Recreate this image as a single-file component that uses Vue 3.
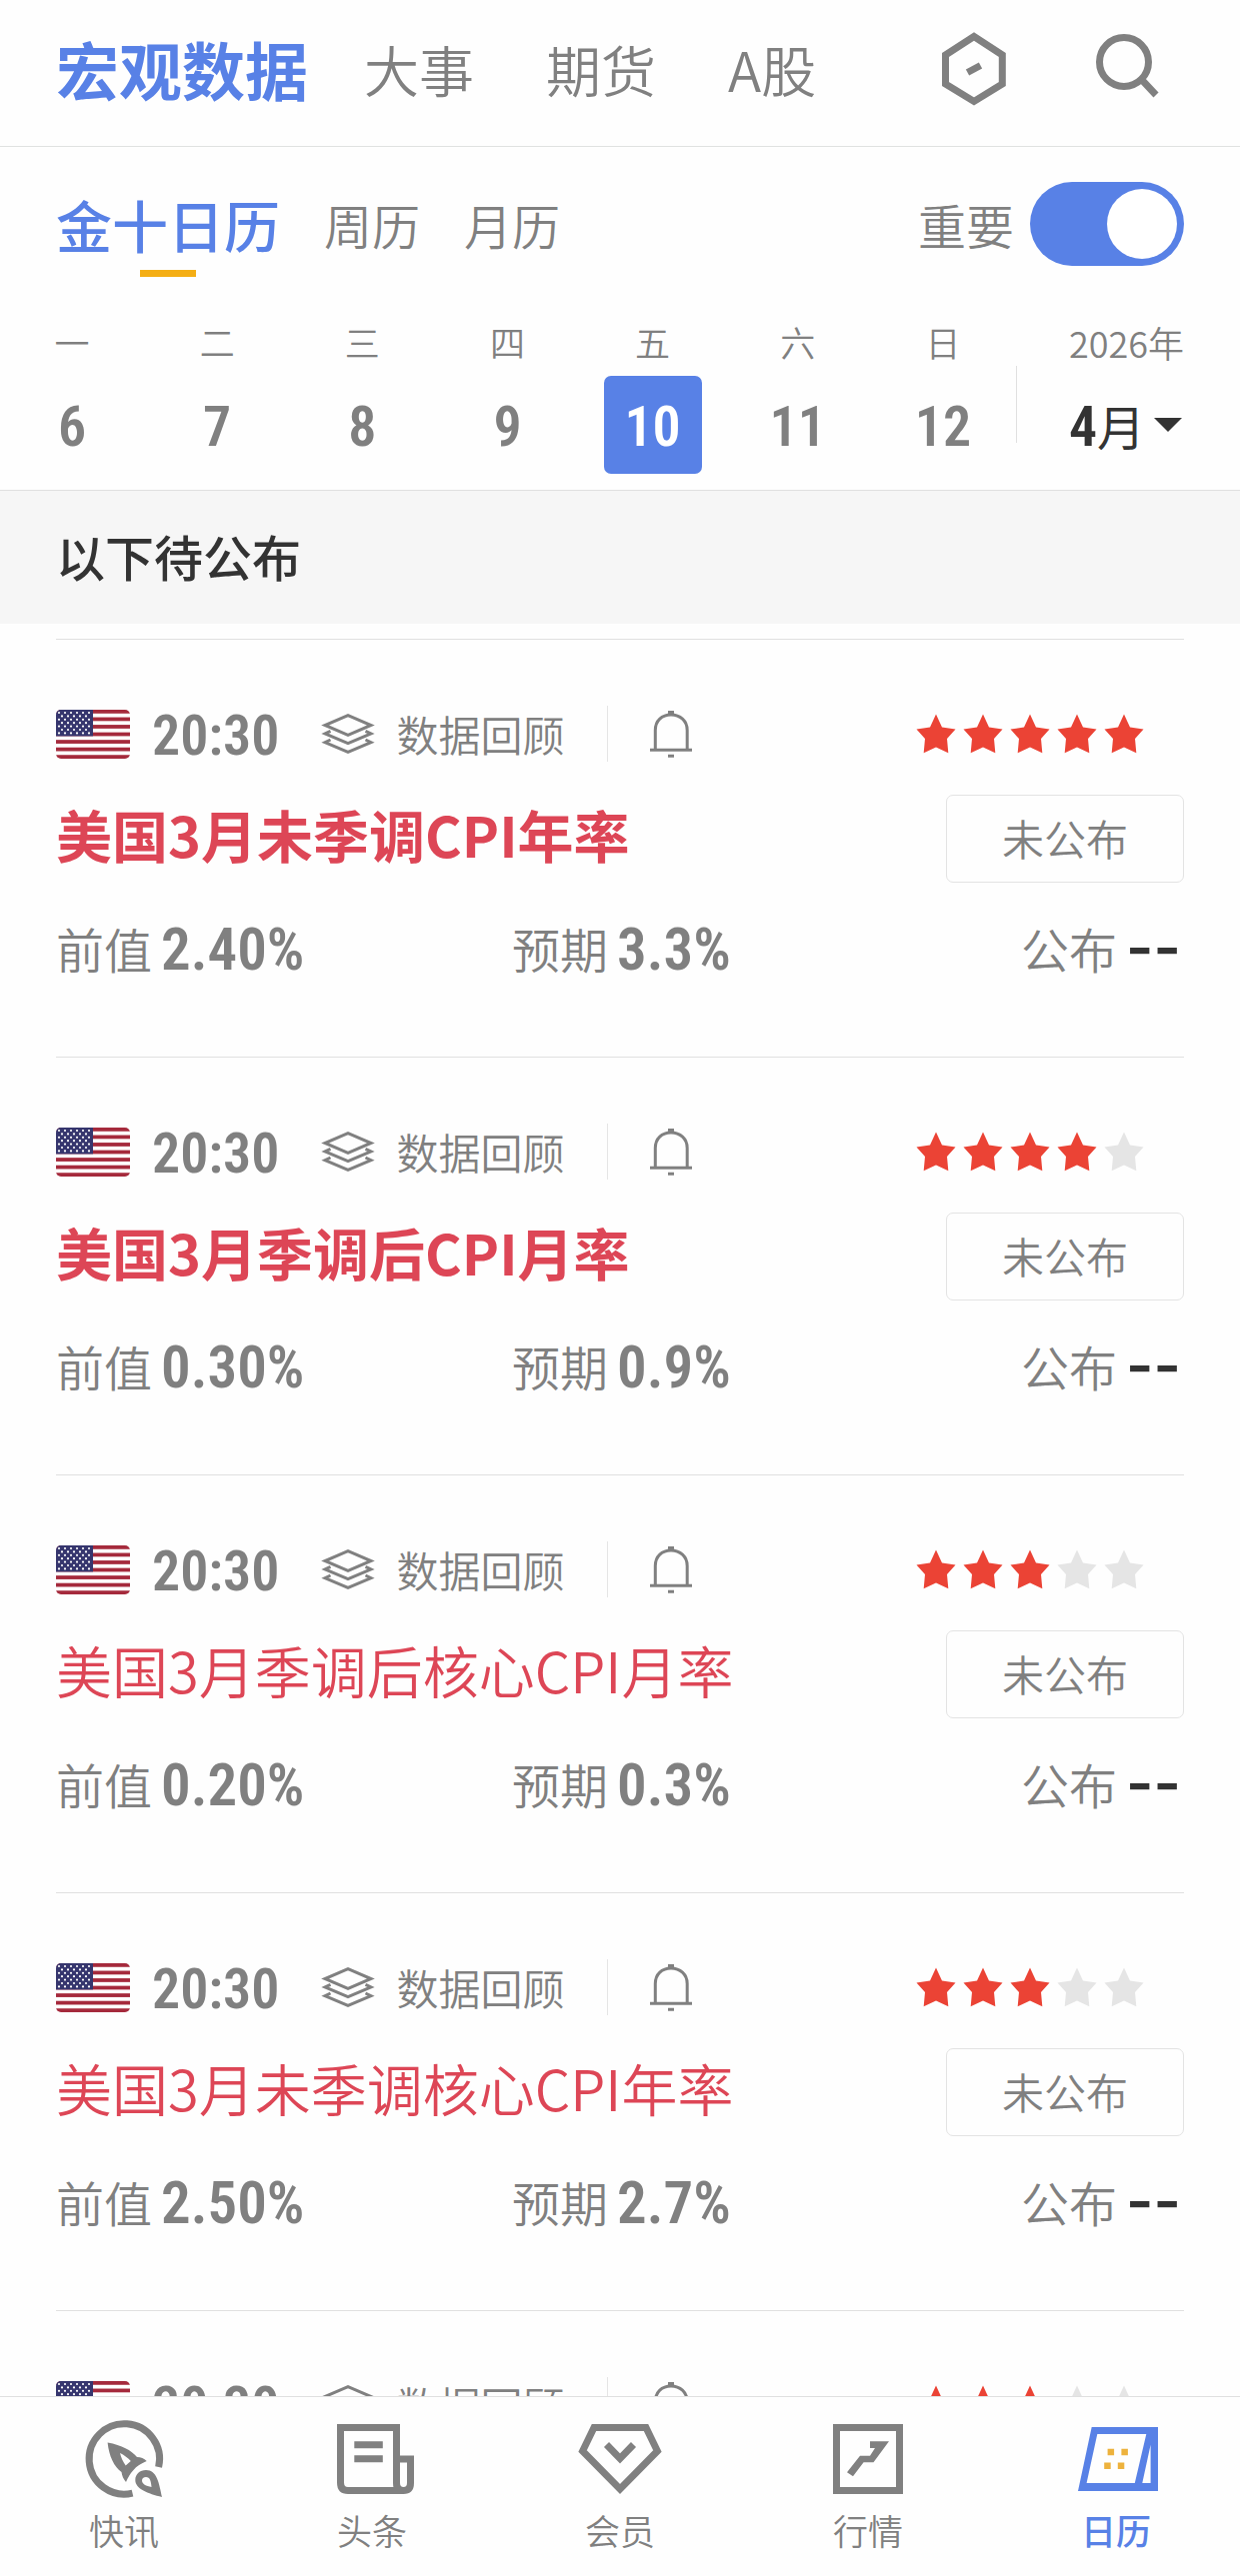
<script setup>
import { ref } from 'vue'

const sections = ['宏观数据', '大事', '期货', 'A股']
const activeSection = ref('宏观数据')

const views = ['金十日历', '周历', '月历']
const activeView = ref('金十日历')

const importantOnly = ref(true)

const days = [
  { name: '一', date: 6 },
  { name: '二', date: 7 },
  { name: '三', date: 8 },
  { name: '四', date: 9 },
  { name: '五', date: 10 },
  { name: '六', date: 11 },
  { name: '日', date: 12 }
]
const selectedDate = ref(10)

const events = [
  { id: 1, title: '美国3月未季调CPI年率', previous: '2.40%', forecast: '3.3%', stars: 5 },
  { id: 2, title: '美国3月季调后CPI月率', previous: '0.30%', forecast: '0.9%', stars: 4 },
  { id: 3, title: '美国3月季调后核心CPI月率', previous: '0.20%', forecast: '0.3%', stars: 3 },
  { id: 4, title: '美国3月未季调核心CPI年率', previous: '2.50%', forecast: '2.7%', stars: 3 },
  { id: 5, title: '', previous: '', forecast: '', stars: 3 }
]

const tabs = ['快讯', '头条', '会员', '行情', '日历']
const activeTab = ref('日历')

// Dots of the flag's canton, alternating between two column offsets.
const cantonDots = []
for (let row = 0; row < 7; row++) {
  for (let col = 0; col < (row % 2 ? 5 : 6); col++) {
    cantonDots.push({ x: (row % 2 ? 6 : 3) + col * 6, y: 3 + row * 3.4 })
  }
}
</script>

<template>
  <div class="page">
    <header class="topbar">
      <nav class="sections">
        <a
          v-for="s in sections"
          :key="s"
          href="#"
          :class="{ active: s === activeSection }"
          @click.prevent="activeSection = s"
        >{{ s }}</a>
      </nav>
      <div class="actions">
        <button type="button" aria-label="设置">
          <svg width="68" height="80" viewBox="0 -2 68 80" fill="none" stroke="#808080" stroke-width="7">
            <path d="M34 6.5 62.3 25V54L34 71.5 5.5 54V25Z" />
            <path d="M27.5 42.5 40.5 35.5" />
          </svg>
        </button>
        <button type="button" aria-label="搜索">
          <svg width="66" height="80" viewBox="0 0 66 80" fill="none" stroke="#808080" stroke-width="7">
            <circle cx="30" cy="34" r="24.5" />
            <path d="M47 51 62 67" />
          </svg>
        </button>
      </div>
    </header>

    <div class="subbar">
      <nav class="views">
        <a
          v-for="v in views"
          :key="v"
          href="#"
          :class="{ active: v === activeView }"
          @click.prevent="activeView = v"
        >{{ v }}</a>
      </nav>
      <label class="switch">
        <span>重要</span>
        <input v-model="importantOnly" type="checkbox" role="switch" />
      </label>
    </div>

    <div class="week">
      <div class="days">
        <div v-for="d in days" :key="d.date" class="day">
          <span class="weekday">{{ d.name }}</span>
          <button
            type="button"
            class="date num"
            :class="{ selected: d.date === selectedDate }"
            @click="selectedDate = d.date"
          >{{ d.date }}</button>
        </div>
      </div>
      <div class="rule"></div>
      <div class="month">
        <span class="weekday">2026年</span>
        <button type="button" class="picker" aria-haspopup="listbox">
          <span class="num">4</span><span class="unit">月</span>
          <svg width="30" height="16" viewBox="0 0 30 16"><path d="M1 1H29L15 15Z" fill="#333" /></svg>
        </button>
      </div>
    </div>

    <h2 class="band">以下待公布</h2>

    <main class="list">
      <div class="items">
        <article v-for="e in events" :key="e.id" class="item">
          <div class="meta">
            <svg class="flag" width="74" height="49" viewBox="0 0 74 49" role="img" aria-label="美国">
              <rect width="74" height="49" fill="#fff" />
              <rect v-for="n in 7" :key="n" width="74" height="3.77" :y="(n - 1) * 7.54" fill="#a52a3c" />
              <rect width="37" height="26.4" fill="#36366e" />
              <circle v-for="(c, i) in cantonDots" :key="i" :cx="c.x" :cy="c.y" r="1.1" fill="#fff" />
            </svg>
            <time class="time num">20:30</time>
            <button type="button" class="review">
              <svg width="54" height="44" viewBox="0 0 54 44" fill="none" stroke="#808080" stroke-width="3">
                <path d="M27 3.7 50 13.5 27 23.4 4 13.5Z" />
                <path d="M9.5 19.3 4 22 27 31.7 50 22 44.5 19.3" />
                <path d="M9.5 28 4 30.7 27 40.4 50 30.7 44.5 28" />
              </svg>
              <span>数据回顾</span>
            </button>
            <span class="split"></span>
            <button type="button" class="bell" aria-label="提醒">
              <svg width="44" height="48" viewBox="0 0 44 48" fill="none" stroke="#808080" stroke-width="3">
                <path d="M6.3 39V20.5C6.3 11 13 5 22 5S38.2 11 38.2 20.5V39" />
                <path d="M1 40.3H43" />
                <path d="M19 2.5H25M19 46.2H25" />
              </svg>
            </button>
            <span class="stars" role="img" :aria-label="e.stars + '/5'">
              <svg v-for="n in 5" :key="n" width="40" height="40" viewBox="0 0 40 40">
                <path
                  d="M20 .5 26 13.5 39.5 15.5 31 25 32.3 39.2 20 33.5 7.7 39.2 9 25 .5 15.5 14 13.5Z"
                  :fill="n <= e.stars ? '#eb4335' : '#e5e5e5'"
                />
              </svg>
            </span>
          </div>
          <div v-if="e.title" class="headline">
            <h3 :class="{ major: e.stars > 3 }">{{ e.title }}</h3>
            <button type="button" class="status">未公布</button>
          </div>
          <dl v-if="e.title" class="values">
            <div><dt>前值</dt><dd class="num">{{ e.previous }}</dd></div>
            <div><dt>预期</dt><dd class="num">{{ e.forecast }}</dd></div>
            <div class="actual"><dt>公布</dt><dd>--</dd></div>
          </dl>
        </article>
      </div>
    </main>

    <nav class="tabbar">
      <a
        v-for="t in tabs"
        :key="t"
        href="#"
        :class="{ active: t === activeTab }"
        @click.prevent="activeTab = t"
      >
        <svg v-if="t === '快讯'" width="80" height="80" viewBox="0 0 80 80">
          <path d="M74.6 48A35.2 35.2 0 1 0 48.5 74.2" fill="none" stroke="#808080" stroke-width="7" />
          <path
            fill="#808080"
            fill-rule="evenodd"
            d="M23.6 23.4C38 26 47 31 53 38 57 38 60 39.5 62.7 42 57 44.500 52.5 47 49.500 51 46 54.500 44 58.500 42 63 39.500 60 38 57 37.500 53 30 47.500 25 37 23.600 23.400ZM36 34C37 38.500 39 42.500 41.700 46.500L46.800 42C43.500 38.500 40 36 36 34Z"
          />
          <path
            fill="#808080"
            fill-rule="evenodd"
            d="M78 78C64 74.5 51.3 70 51.3 61 51.3 55 56 51 62 51 73 51 75 64 78 78ZM67.5 68C67 62 66 58 62 58 59.5 58 58 59.5 58 61.5 58 65 62 67 67.5 68Z"
          />
        </svg>
        <svg v-else-if="t === '头条'" width="80" height="80" viewBox="-4 0 80 80" fill="none" stroke="#808080" stroke-width="7">
          <path d="M68 71.5H12Q4.5 71.5 4.5 63.5V8.5H60.5V64Q60.5 71.5 67.5 71.5T74.5 64V40H60.5" />
          <path d="M18.3 25.7H46.8M18.3 39.8H46.8" />
        </svg>
        <svg v-else-if="t === '会员'" width="84" height="80" viewBox="0 0 84 80" fill="none" stroke="#808080" stroke-width="7">
          <path d="M16 8.5H68L79.4 32 42 70 4.6 32Z" />
          <path d="M28.5 25.5 42 39.5 55.5 25.5" />
        </svg>
        <svg v-else-if="t === '行情'" width="80" height="80" viewBox="0 0 80 80">
          <rect x="8.5" y="8.5" width="63" height="63" fill="none" stroke="#808080" stroke-width="7" />
          <path fill="#808080" d="M19 53.3 32 36.7H42L47 29H42V22.3H61L45.5 43.3H35.6L25 57.3Z" />
        </svg>
        <svg v-else width="80" height="80" viewBox="-1 0 80 80">
          <path
            fill="#5881e6"
            fill-rule="evenodd"
            d="M14.7 8H81V72H1ZM20.3 15 9.6 64H57.8L69.3 15ZM73.6 25.7 65.3 64H73.6Z"
          />
          <path fill="#edb23d" d="M30.6 29.7h6.5v6.6h-6.5zM44.4 29.7h6.5v6.6h-6.5zM27.2 43.5h6.5v6.6h-6.5zM40.8 43.5h6.5v6.6h-6.5z" />
        </svg>
        <span>{{ t }}</span>
      </a>
    </nav>
  </div>
</template>

<style>
body {
  background: #fefefe;
}
</style>

<style scoped>
.page {
  display: flex;
  flex-direction: column;
  height: 100vh;
  background: #fefefe;
  color: #808080;
  font-family: "Noto Sans CJK SC", sans-serif;
  font-weight: 350;
}
a {
  color: inherit;
  text-decoration: none;
}
button {
  margin: 0;
  padding: 0;
  border: 0;
  background: none;
  color: inherit;
  font: inherit;
  cursor: pointer;
}
svg {
  display: block;
  flex: none;
  overflow: visible;
}
.num {
  padding-top: 4px;
  font-family: "Roboto Condensed", Roboto, sans-serif;
  font-size: 56px;
  font-weight: 600;
  line-height: 56px;
}
.topbar {
  display: flex;
  flex: none;
  justify-content: space-between;
  align-items: center;
  height: 136px;
  padding: 0 80px 10px 56px;
  border-bottom: 1px solid #e0e2e1;
}
.sections {
  display: flex;
  align-items: center;
  gap: 72px;
  font-size: 55px;
  line-height: 80px;
}
.sections a.active {
  margin-right: -16px;
  color: #5881e6;
  font-size: 63px;
  font-weight: 700;
}
.actions {
  display: flex;
  gap: 86px;
}
.subbar {
  display: flex;
  flex: none;
  justify-content: space-between;
  align-items: center;
  height: 84px;
  padding: 35px 56px 56px;
}
.views {
  display: flex;
  align-items: center;
  gap: 44px;
  font-size: 48px;
  line-height: 84px;
}
.views a.active {
  position: relative;
  color: #5881e6;
  font-size: 56px;
  font-weight: 500;
}
.views a.active::after {
  content: "";
  position: absolute;
  bottom: -11px;
  left: 50%;
  width: 56px;
  height: 7px;
  margin-left: -28px;
  background: #f4ae15;
}
.switch {
  display: flex;
  align-items: center;
  gap: 16px;
  font-size: 48px;
  line-height: 84px;
}
.switch input {
  display: flex;
  align-items: center;
  appearance: none;
  box-sizing: border-box;
  width: 154px;
  height: 84px;
  margin: 0;
  padding: 7px;
  border-radius: 42px;
  background: #ccc;
}
.switch input::before {
  content: "";
  width: 70px;
  height: 70px;
  border-radius: 50%;
  background: #fff;
}
.switch input:checked {
  justify-content: flex-end;
  background: #5881e6;
}
.week {
  display: flex;
  flex: none;
  padding: 0 56px 16px 23px;
  border-bottom: 1px solid #e0e0e0;
}
.days {
  display: flex;
  flex: 1;
  justify-content: space-between;
}
.day {
  display: flex;
  flex-direction: column;
  align-items: center;
  gap: 14px;
}
.weekday {
  font-size: 35px;
  line-height: 40px;
}
.date {
  box-sizing: border-box;
  width: 98px;
  height: 98px;
  border-radius: 7px;
}
.date.selected {
  background: #5881e6;
  color: #fff;
}
.rule {
  width: 1px;
  height: 77px;
  margin: 44px 52px 0 24px;
  background: #e0e0e0;
}
.month {
  display: flex;
  flex-direction: column;
  gap: 14px;
}
.month .weekday {
  font-size: 36px;
}
.picker {
  display: flex;
  align-items: center;
  height: 98px;
  color: #333;
  line-height: 56px;
}
.picker .unit {
  margin-right: 8px;
  font-size: 48px;
  font-weight: 400;
}
.band {
  flex: none;
  margin: 0;
  padding: 33px 56px 36px;
  background: #f6f6f6;
  color: #333;
  font-size: 49px;
  font-weight: 500;
  line-height: 64px;
}
.list {
  flex: 1;
  min-height: 0;
  padding: 15px 56px 0;
  overflow: hidden;
}
.items {
  border-top: 1px solid #e0e0e0;
}
.item {
  padding: 66px 0 81px;
  border-bottom: 1px solid #e0e0e0;
}
.meta {
  display: flex;
  align-items: center;
  height: 56px;
}
.flag {
  border-radius: 5px;
  overflow: hidden;
}
.time {
  margin: 0 42px 0 22px;
}
.review {
  display: flex;
  align-items: center;
  gap: 21px;
  font-size: 42px;
  line-height: 56px;
}
.split {
  width: 1px;
  height: 56px;
  margin: 0 41px 0 43px;
  background: #e5e5e5;
}
.stars {
  display: flex;
  gap: 7px;
  margin-left: auto;
  padding-right: 40px;
}
.headline {
  display: flex;
  justify-content: space-between;
  align-items: center;
  margin-top: 33px;
}
.headline h3 {
  margin: 0;
  padding-bottom: 11px;
  color: #dd4656;
  font-size: 56px;
  font-weight: 350;
  line-height: 77px;
}
.headline h3.major {
  font-weight: 700;
}
.status {
  box-sizing: border-box;
  width: 238px;
  height: 88px;
  padding-bottom: 3px;
  border: 1px solid #e3e3e3;
  border-radius: 7px;
  font-size: 42px;
}
.values {
  display: grid;
  grid-template-columns: 38fr 33fr 23fr;
  margin: 35px 0 0;
}
.values div {
  display: flex;
  align-items: center;
  gap: 9px;
  height: 60px;
}
.values dt {
  font-size: 48px;
  line-height: 56px;
}
.values dd {
  margin: 0;
  font-size: 59px;
}
.item .values {
  margin-bottom: -2px;
}
.values .actual {
  justify-content: flex-end;
  padding-right: 3px;
}
.values .actual dd {
  color: #333;
  font-family: Inter, sans-serif;
  font-weight: 600;
  line-height: 56px;
}
.tabbar {
  display: flex;
  flex: none;
  padding: 22px 0 26px;
  border-top: 1px solid #e0e0e0;
  background: #fefefe;
}
.tabbar a {
  display: flex;
  flex: 1;
  flex-direction: column;
  align-items: center;
  gap: 11px;
  font-size: 35px;
  line-height: 40px;
}
.tabbar a.active {
  color: #5881e6;
  font-weight: 500;
}
</style>
